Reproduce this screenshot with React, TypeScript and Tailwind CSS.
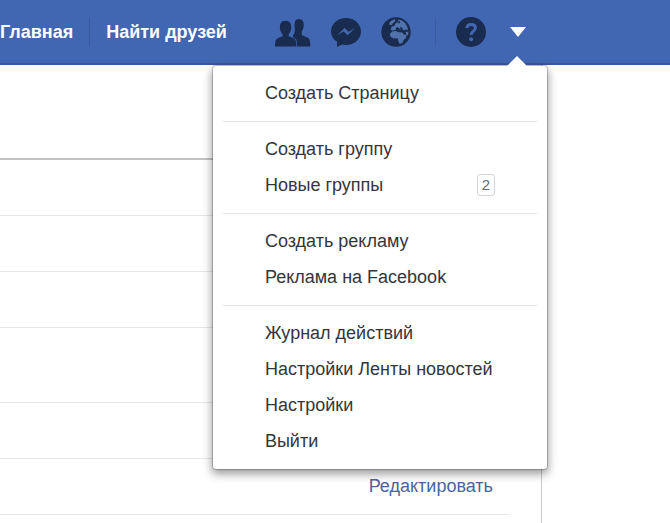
interface MenuEntry {
  label: string;
  count?: number;
}

const menuGroups: MenuEntry[][] = [
  [{ label: 'Создать Страницу' }],
  [{ label: 'Создать группу' }, { label: 'Новые группы', count: 2 }],
  [{ label: 'Создать рекламу' }, { label: 'Реклама на Facebook' }],
  [
    { label: 'Журнал действий' },
    { label: 'Настройки Ленты новостей' },
    { label: 'Настройки' },
    { label: 'Выйти' },
  ],
];

function FriendsIcon() {
  return (
    <svg className="h-[30px] w-9" viewBox="0 0 36 30">
      <path
        d="M19.500 9C19 4.800 20.500 2 24 2s5 2.800 4.700 6.800c-.2 2.500-.9 4.300-1.900 5.600v3.600c2.500 1.300 6.600 2.200 7.700 4.700.6 1.500.8 4 .8 6.800H18V18.500c1.700-2 2.300-5.500 1.500-9.500Z"
        fill="#192c50"
      />
      <path
        d="M10.500 3.700c4 0 6.100 2.800 5.800 7.200-.2 2.700-1.200 4.700-2.600 6v2.300c2.500 1.100 5.800 1.700 6.800 3.900.7 1.500.8 3.900.8 6.400H0c0-2.500.2-4.900.9-6.400 1-2.200 4.200-2.800 6.700-3.900v-2.300c-1.500-1.300-2.500-3.300-2.700-6-.3-4.400 1.800-7.200 5.600-7.200Z"
        fill="#192c50"
        stroke="#4267b2"
        strokeWidth="1.500"
        paintOrder="stroke"
      />
    </svg>
  );
}

function MessengerIcon() {
  return (
    <svg className="h-[30px] w-[30px]" viewBox="0 0 30 30">
      <path
        d="M15 1C6.500 1 0 6.900 0 14.500c0 4.100 2.300 7.700 6 10.200V30l5-2.600c1.300.4 2.600.6 4 .6 8.500 0 15-6 15-13.500S23.500 1 15 1Z"
        fill="#192c50"
      />
      <path d="m6 18.300 7.600-7.300 4 3.700L24 11l-7.400 7.300-4-3.700Z" fill="#4467a9" />
    </svg>
  );
}

function GlobeIcon() {
  return (
    <svg className="h-[30px] w-[30px]" viewBox="0 0 30 30">
      <circle cx="15" cy="15" r="14.700" fill="#192c50" />
      <g fill="#5272ad">
        <path d="m8.500 5.500 2.600-2.200 3.200-1.200-.3 2.500-2.300 1.600-.9 1.700-2.600-.2Z" />
        <path d="m9.500 12.500 1.300-2.800 2.800-1 .8-2.200 2.300-1.300.6-2.600 3.700 1 3 2.400 2.200 3.500.8 3.500-2.300-.5-1.400 1-2.300-1.500-1.900.2-1.600-1.500-1.900.8-1.100 1.500-3 .6Z" />
        <path d="m8.800 17 2.400-2.500 3.700-.4 2.800 1.200 3.600.2 1.700 2 2.600.6-.7 3-2.300 2-.8 2.500-3.100 1.300-1.400-2.700-.5-2.900-4 .2-3.200-1.700Z" />
        <path d="m24.500 15 3-.4-.5 4-1.600-.8Z" />
      </g>
      <path
        d="m14.300 11.200 2.500-1.300.7 1.500-2.200 1Zm4.500-1.200 2.400.4.6 2-2.200-.4Zm-1.700-5.200 1.800-1 .3 2-1.700.8Z"
        fill="#192c50"
      />
    </svg>
  );
}

function HelpIcon() {
  return (
    <svg className="h-[30px] w-[30px]" viewBox="0 0 30 30">
      <circle cx="15" cy="15" r="15" fill="#192c50" />
      <path
        d="M10.800 11.200c.2-2.500 1.800-3.800 4.300-3.800s4.300 1.300 4.300 3.500c0 3.200-4.300 3.300-4.300 7.100"
        fill="none"
        stroke="#4267b2"
        strokeWidth="3"
      />
      <circle cx="15.100" cy="22.300" r="2" fill="#4267b2" />
    </svg>
  );
}

function AccountMenu() {
  return (
    <div className="absolute top-[66px] -right-[21px] z-10 w-[334px] rounded-[3px] bg-white px-[10px] shadow-[0_0_0_1px_rgba(0,0,0,0.2),0_4px_10px_1px_rgba(0,0,0,0.4)]">
      <svg className="absolute -top-[10px] right-5 h-[10px] w-5" viewBox="0 0 20 10">
        <path d="M0 10 10 0l10 10Z" fill="#fff" />
      </svg>
      {menuGroups.map((group) => (
        <ul
          key={group[0].label}
          className="border-b border-[#e3e4e6] pt-[9px] pb-[10px] last:border-b-0"
        >
          {group.map((entry) => (
            <li key={entry.label}>
              <a
                href="#"
                className="flex h-9 items-center justify-between px-[42px] text-[18px] whitespace-nowrap text-[#33363d]"
              >
                {entry.label}
                {entry.count && (
                  <span className="flex h-[22px] w-[18px] items-center justify-center rounded-[3px] border border-[#d2d4d8] text-[15px] text-[#666a72]">
                    {entry.count}
                  </span>
                )}
              </a>
            </li>
          ))}
        </ul>
      ))}
    </div>
  );
}

function TopBar() {
  return (
    <header className="flex h-[65px] items-start border-b-2 border-[#38589b] bg-[#4267b2]">
      <nav className="flex h-16 items-center text-[18px] font-bold whitespace-nowrap text-white">
        <a href="#">Главная</a>
        <span className="mx-4 h-7 w-px bg-[#3a5b9f]" />
        <a href="#">Найти друзей</a>
      </nav>
      <div className="ml-12 flex h-16 items-center">
        <button type="button" aria-label="Запросы на добавление в друзья">
          <FriendsIcon />
        </button>
        <button type="button" aria-label="Сообщения" className="ml-5">
          <MessengerIcon />
        </button>
        <button type="button" aria-label="Уведомления" className="ml-5">
          <GlobeIcon />
        </button>
        <span className="mx-5 ml-6 h-7 w-px bg-[#3a5b9f]" />
        <button type="button" aria-label="Быстрая справка">
          <HelpIcon />
        </button>
        <div className="relative ml-6 flex h-16 items-center">
          <button type="button" aria-label="Настройки аккаунта">
            <svg className="h-[10px] w-4" viewBox="0 0 16 10">
              <path d="M0 0h16L8 10Z" fill="#fff" />
            </svg>
          </button>
          <AccountMenu />
        </div>
      </div>
    </header>
  );
}

export default function App() {
  return (
    <div className="flex min-h-screen flex-col bg-white font-['Liberation_Sans',Arial,sans-serif]">
      <TopBar />
      <main className="mr-32 flex-1 border-r border-[#c8c9cc] pr-8">
        <div className="h-[95px] border-b-2 border-[#c3c3c3]" />
        <div className="h-14 border-b border-[#e6e7ea]" />
        <div className="h-14 border-b border-[#e6e7ea]" />
        <div className="h-14 border-b border-[#e6e7ea]" />
        <div className="h-[75px] border-b border-[#e6e7ea]" />
        <div className="h-14 border-b border-[#e6e7ea]" />
        <div className="flex h-14 items-center justify-end border-b border-[#e6e7ea] pr-4 text-[18px] text-[#4b63a0]">
          <a href="#">Редактировать</a>
        </div>
      </main>
    </div>
  );
}
